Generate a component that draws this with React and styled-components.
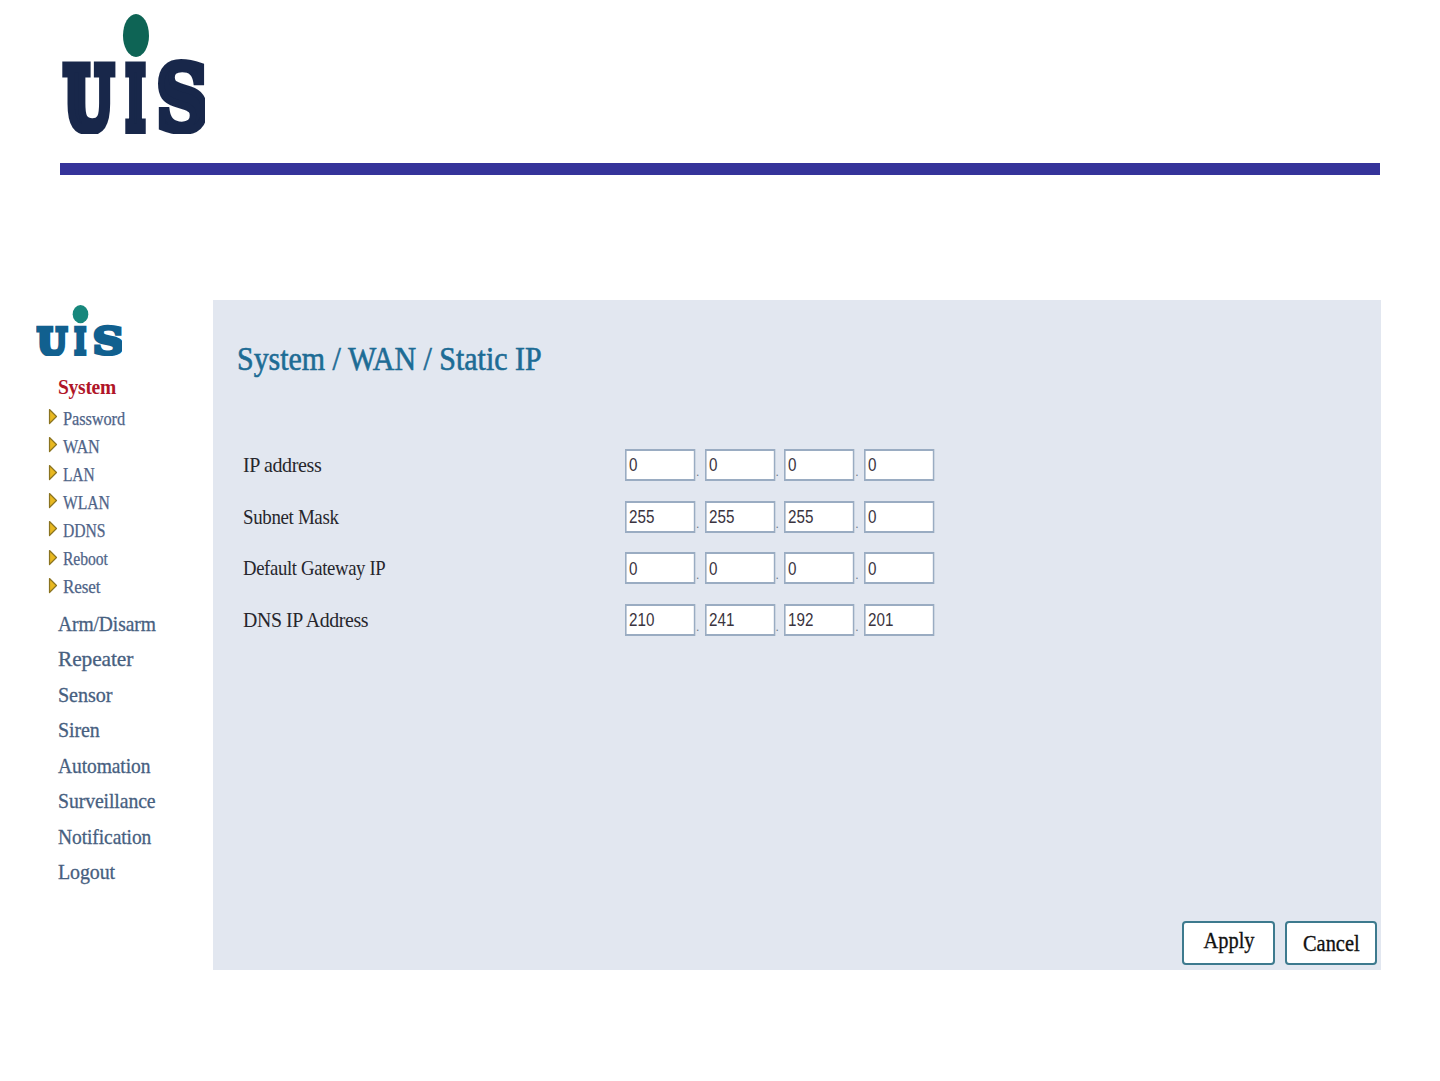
import React from 'react';
import styled, { createGlobalStyle } from 'styled-components';

const GlobalStyle = createGlobalStyle`
  html, body {
    margin: 0;
    padding: 0;
    background: #ffffff;
    font-family: 'Liberation Serif', 'Times New Roman', serif;
  }
`;

const Page = styled.div`
  width: 1440px;
  height: 1081px;
  overflow: hidden;
`;

const Header = styled.header`
  height: 163px;
  padding: 14px 0 0 62px;
  box-sizing: border-box;
`;

const Rule = styled.div`
  width: 1320px;
  height: 12px;
  margin-left: 60px;
  background: #35339a;
`;

const Main = styled.main`
  display: flex;
  height: 670px;
  margin-top: 125px;
  width: 1381px;
`;

const Sidebar = styled.nav`
  width: 213px;
  flex: none;
  display: flex;
  flex-direction: column;
  padding-top: 5px;
  box-sizing: border-box;
`;

const LogoWrap = styled.div`
  height: 51px;
  margin-left: 36px;
`;

// the reference text is a squeezed Times, so it is narrowed without losing height
const Narrow = styled.span`
  display: inline-block;
  white-space: nowrap;
  transform: scaleX(${(p) => p.$x});
  transform-origin: ${(p) => p.$origin || 'left'} center;
`;

const SectionTitle = styled.div`
  height: 30px;
  line-height: 30px;
  margin: 16px 0 3px 58px;
  color: #b01528;
  font-size: 21px;
  font-weight: bold;
  letter-spacing: -0.3px;
`;

const SubItem = styled.div`
  height: 28.1px;
  display: flex;
  align-items: center;
  padding-left: 48px;
  color: #4f6488;
  -webkit-text-stroke: 0.25px #4f6488;
  font-size: 18px;
  letter-spacing: -0.1px;
`;

const Arrow = styled.svg`
  width: 10px;
  height: 17px;
  margin: -5px 5px 0 0;
  flex: none;
`;

const MainItems = styled.div`
  display: flex;
  flex-direction: column;
  margin-top: 5px;
`;

const MainItem = styled.div`
  height: 35.5px;
  line-height: 35.5px;
  padding-left: 58px;
  color: #47607f;
  -webkit-text-stroke: 0.3px #47607f;
  font-size: 21px;
  letter-spacing: -0.1px;
`;

const Panel = styled.section`
  flex: 1;
  display: flex;
  flex-direction: column;
  background: #e2e7f0;
  padding-top: 39px;
  box-sizing: border-box;
`;

const Title = styled.h1`
  margin: 0 0 60px 24px;
  height: 40px;
  line-height: 40px;
  font-size: 33px;
  font-weight: normal;
  color: #1d6c95;
  -webkit-text-stroke: 0.6px #1d6c95;
`;

const Form = styled.div`
  display: flex;
  flex-direction: column;
  padding-left: 30px;
`;

const Row = styled.div`
  display: flex;
  align-items: center;
  height: 51.7px;
`;

const Label = styled.label`
  width: 382px;
  flex: none;
  font-size: 22px;
  color: #26262c;
  letter-spacing: -0.4px;
`;

const Octets = styled.div`
  display: flex;
  align-items: center;
`;

// digits are squeezed too: the box is laid out wider and scaled back to 70px
const Octet = styled.input`
  width: 87.5px;
  margin-right: -17.5px;
  height: 32px;
  box-sizing: border-box;
  border: 2px solid #9aacc2;
  background: #ffffff;
  padding: 1px 0 0 3px;
  font-family: 'Liberation Sans', Arial, sans-serif;
  font-size: 19px;
  color: #3a3440;
  outline: none;
  transform: scaleX(0.8);
  transform-origin: left center;
`;

const Dot = styled.span`
  width: 9.6px;
  height: 32px;
  box-sizing: border-box;
  padding: 0 0 3px 1px;
  display: flex;
  align-items: flex-end;
  font-family: 'Liberation Sans', Arial, sans-serif;
  font-size: 12px;
  line-height: 12px;
  color: #6b7686;
`;

const Actions = styled.div`
  display: flex;
  justify-content: flex-end;
  gap: 10px;
  margin-top: auto;
  padding: 0 4px 5px 0;
`;

const Button = styled.button`
  width: ${(p) => p.$width}px;
  height: 44px;
  box-sizing: border-box;
  border: 2px solid #3d7a8e;
  border-radius: 4px;
  background: #ffffff;
  padding: 0 0 ${(p) => p.$lift}px 0;
  font-family: 'Liberation Serif', 'Times New Roman', serif;
  font-size: 24px;
  color: #111111;
  -webkit-text-stroke: 0.35px #111111;
`;

const Logo = ({ width, height, letters, dot }) => (
  <svg width={width} height={height} viewBox="0 0 143 120" preserveAspectRatio="none" style={{ display: 'block' }}>
    <ellipse cx="74" cy="21.5" rx="13" ry="21.5" fill={dot} />
    <g fontFamily="'DejaVu Serif', serif" fontWeight="bold" fill={letters} stroke={letters} strokeLinejoin="miter">
      <text x="2" y="114.5" fontSize="85" strokeWidth="11" textLength="49" lengthAdjust="spacingAndGlyphs">U</text>
      <text x="64" y="114.5" fontSize="85" strokeWidth="11" textLength="19" lengthAdjust="spacingAndGlyphs">I</text>
      <text x="94.5" y="116" fontSize="89" strokeWidth="8" textLength="52" lengthAdjust="spacingAndGlyphs">S</text>
    </g>
  </svg>
);

const subItems = [
  { text: 'Password', x: 0.91 },
  { text: 'WAN', x: 0.9 },
  { text: 'LAN', x: 0.86 },
  { text: 'WLAN', x: 0.87 },
  { text: 'DDNS', x: 0.87 },
  { text: 'Reboot', x: 0.87 },
  { text: 'Reset', x: 0.95 },
];
const mainItems = [
  { text: 'Arm/Disarm', x: 0.93 },
  { text: 'Repeater', x: 1.02 },
  { text: 'Sensor', x: 0.96 },
  { text: 'Siren', x: 0.95 },
  { text: 'Automation', x: 0.93 },
  { text: 'Surveillance', x: 0.94 },
  { text: 'Notification', x: 0.93 },
  { text: 'Logout', x: 0.95 },
];
const rows = [
  { label: 'IP address', x: 0.908, values: ['0', '0', '0', '0'] },
  { label: 'Subnet Mask', x: 0.86, values: ['255', '255', '255', '0'] },
  { label: 'Default Gateway IP', x: 0.85, values: ['0', '0', '0', '0'] },
  { label: 'DNS IP Address', x: 0.9, values: ['210', '241', '192', '201'] },
];

const App = () => (
  <Page>
    <GlobalStyle />
    <Header>
      <Logo width={143} height={120} letters="#18274a" dot="#0e6455" />
    </Header>
    <Rule />
    <Main>
      <Sidebar>
        <LogoWrap>
          <Logo width={86} height={51} letters="#11608f" dot="#17877c" />
        </LogoWrap>
        <SectionTitle><Narrow $x={0.93}>System</Narrow></SectionTitle>
        {subItems.map((item) => (
          <SubItem key={item.text}>
            <Arrow viewBox="0 0 10 17">
              <path d="M1.5 1.5 L8.5 8.5 L1.5 15.5 Z" fill="#e8b820" stroke="#8a7320" strokeWidth="1.2" strokeLinejoin="round" />
            </Arrow>
            <Narrow $x={item.x}>{item.text}</Narrow>
          </SubItem>
        ))}
        <MainItems>
          {mainItems.map((item) => (
            <MainItem key={item.text}><Narrow $x={item.x}>{item.text}</Narrow></MainItem>
          ))}
        </MainItems>
      </Sidebar>
      <Panel>
        <Title><Narrow $x={0.907}>System / WAN / Static IP</Narrow></Title>
        <Form>
          {rows.map((row) => (
            <Row key={row.label}>
              <Label><Narrow $x={row.x}>{row.label}</Narrow></Label>
              <Octets>
                {row.values.map((value, i) => (
                  <React.Fragment key={i}>
                    {i > 0 && <Dot>.</Dot>}
                    <Octet type="text" value={value} readOnly />
                  </React.Fragment>
                ))}
              </Octets>
            </Row>
          ))}
        </Form>
        <Actions>
          <Button $width={93} $lift={5}><Narrow $x={0.85} $origin="center">Apply</Narrow></Button>
          <Button $width={92} $lift={0}><Narrow $x={0.85} $origin="center">Cancel</Narrow></Button>
        </Actions>
      </Panel>
    </Main>
  </Page>
);

export default App;
